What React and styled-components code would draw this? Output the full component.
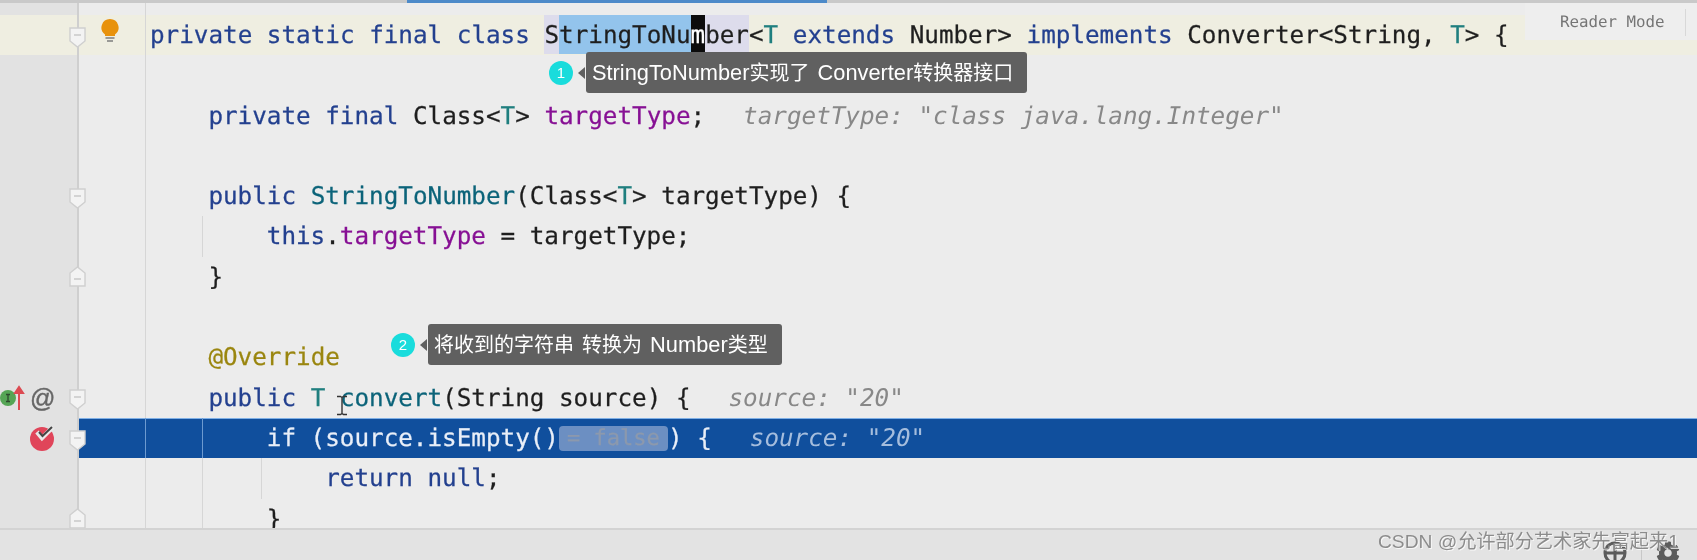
import React from 'react';
import styled, { createGlobalStyle } from 'styled-components';
import { FaCog } from 'react-icons/fa';

const GlobalStyle = createGlobalStyle`
  html, body { margin: 0; padding: 0; height: 100%; overflow: hidden; background: #ececec; }
`;

const tokenColors = {
  kw: '#23408f',
  id: '#1e1e1e',
  type: '#1f7f7f',
  field: '#871094',
  fn: '#0b6379',
  ann: '#9a860f',
  on: '#e9eff8',
};

const Page = styled.div`
  width: 1697px;
  height: 560px;
  display: flex;
  flex-direction: column;
  position: relative;
  overflow: hidden;
  filter: blur(0.45px);
  font-family: "DejaVu Sans Mono", "Liberation Mono", monospace;
`;

const TopBar = styled.div`
  height: 3px;
  flex: none;
  background: #c9c9c9;
  padding-left: 407px;
`;

const ActiveTab = styled.div`
  width: 420px;
  height: 100%;
  background: #4d8ac9;
`;

const Editor = styled.div`
  flex: 1;
  min-height: 0;
  overflow: hidden;
  background: #ececec;
`;

const Row = styled.div`
  display: flex;
  height: ${(p) => p.$height || 40.3}px;
  background: ${(p) => (p.$tone === 'current' ? '#efeee1' : p.$tone === 'active' ? '#104f9d' : 'transparent')};
  box-shadow: ${(p) => (p.$tone === 'active' ? 'inset 0 1px 0 #7fb0e6' : 'none')};
`;

const Gutter = styled.div`
  width: 79px;
  flex: none;
  box-sizing: border-box;
  display: grid;
  grid-template-columns: 30px 27px 20px;
  align-items: center;
  background: ${(p) => (p.$tone === 'current' ? '#efeee1' : '#e2e2e2')};
  border-right: 2px solid #cfcfcf;
`;

const FoldColumn = styled.div`
  width: 67px;
  flex: none;
  box-sizing: border-box;
  display: flex;
  align-items: center;
  padding-left: 21px;
  border-right: 1px solid ${(p) => (p.$tone === 'active' ? '#6d9ad0' : '#d6d6d6')};
`;

const Code = styled.div`
  flex: 1;
  display: flex;
  align-items: center;
  padding-left: 4px;
  font-size: 24.27px;
  text-rendering: geometricPrecision;
  color: ${tokenColors.id};
`;

const CodeText = styled.div`
  white-space: pre;
  line-height: 39px;
  height: 39px;
  align-self: flex-start;
  -webkit-text-stroke: 0.25px currentColor;
`;

const Level = styled.span`
  display: inline-block;
  width: 58.4px;
  height: 40.3px;
  flex: none;
  position: relative;
  &::after {
    content: '';
    display: ${(p) => (p.$guide ? 'block' : 'none')};
    position: absolute;
    top: 0;
    bottom: 0;
    right: 5px;
    width: 1px;
    background: ${(p) => (p.$active ? '#6d9ad0' : '#d6d6d6')};
  }
`;

const Token = styled.span`
  color: ${(p) => tokenColors[p.$kind] || tokenColors.id};
`;

const Mark = styled.span`
  display: inline-block;
  height: 39px;
  background: ${(p) => (p.$mark === 'sel' ? '#93c4ec' : p.$mark === 'caret' ? '#0c0c0c' : '#dddcec')};
  color: ${(p) => (p.$mark === 'caret' ? '#ffffff' : tokenColors.id)};
`;

const Hint = styled.span`
  margin-left: 38px;
  font-style: italic;
  -webkit-text-stroke: 0;
  color: ${(p) => (p.$active ? '#a5bddd' : '#888888')};
`;

const InlayPill = styled.span`
  display: inline-block;
  width: 109px;
  height: 25px;
  box-sizing: border-box;
  padding-left: 8px;
  border-radius: 4px;
  background: #6c8fc2;
  color: #8c99ad;
  font-size: 22px;
  line-height: 25px;
  vertical-align: 1px;
`;

const FoldSvg = styled.svg`
  grid-column: 3;
  justify-self: end;
  width: 17px;
  height: 21px;
  margin-right: -9px;
  margin-top: ${(p) => (p.$up ? 0 : 4)}px;
  position: relative;
  z-index: 2;
  transform: ${(p) => (p.$up ? 'scaleY(-1)' : 'none')};
`;

const ImplementIcon = styled.svg`
  grid-column: 1;
  width: 28px;
  height: 26px;
`;

const AtSign = styled.span`
  grid-column: 2;
  font-family: "Liberation Sans", sans-serif;
  font-size: 25px;
  line-height: 26px;
  color: #666666;
  -webkit-text-stroke: 0.4px currentColor;
`;

const BreakIcon = styled.svg`
  grid-column: 2;
  width: 26px;
  height: 28px;
`;

const Bulb = styled.svg`
  width: 20px;
  height: 24px;
  margin-top: -8px;
`;

const ReaderBar = styled.div`
  position: absolute;
  left: 1525px;
  right: 0;
  top: 3px;
  height: 37px;
  background: #eeeeee;
  display: flex;
  align-items: center;
  padding-left: 35px;
  font-size: 15.8px;
  color: #757575;
  text-rendering: geometricPrecision;
  &::after {
    content: '';
    position: absolute;
    left: 160px;
    top: 6px;
    bottom: 4px;
    width: 1px;
    background: #d8d8d8;
  }
`;

const Tip = styled.div`
  position: absolute;
  left: ${(p) => p.$left}px;
  top: ${(p) => p.$top}px;
  display: flex;
  align-items: center;
  font-family: "Liberation Sans", "Noto Sans CJK SC", sans-serif;
`;

const TipBadge = styled.div`
  width: 24px;
  height: 24px;
  border-radius: 50%;
  background: #19dcdc;
  color: #ffffff;
  font-size: 15px;
  line-height: 24px;
  text-align: center;
  margin-right: 5px;
`;

const TipArrow = styled.div`
  width: 0;
  height: 0;
  border-top: 6px solid transparent;
  border-bottom: 6px solid transparent;
  border-right: 7px solid #606060;
`;

const TipBox = styled.div`
  height: 41px;
  box-sizing: border-box;
  padding: 0 14px 0 6px;
  margin-left: 1px;
  background: #606060;
  border-radius: 3px;
  color: #ffffff;
  font-size: 20px;
  line-height: 41px;
  white-space: pre;
`;

const TipLatin = styled.span`
  font-size: 21.8px;
  word-spacing: 2px;
`;

const TextCursor = styled.svg`
  position: absolute;
  left: 336px;
  top: 395px;
  width: 12px;
  height: 21px;
`;

const StatusBar = styled.div`
  height: 32px;
  flex: none;
  box-sizing: border-box;
  background: #e3e3e3;
  border-top: 2px solid #d3d3d3;
  display: flex;
  justify-content: flex-end;
  align-items: flex-start;
  padding: 11px 17px 0 0;
  overflow: hidden;
`;

const StatusIcon = styled.div`
  width: 24px;
  height: 24px;
  flex: none;
  color: #5c5c5c;
  margin-left: ${(p) => p.$gap || 0}px;
  border-left: ${(p) => (p.$divided ? '1px solid #c8c8c8' : 'none')};
  padding-left: ${(p) => (p.$divided ? 14 : 0)}px;
`;

const Watermark = styled.div`
  position: absolute;
  left: 1378px;
  top: 530px;
  font-family: "Liberation Sans", "Noto Sans CJK SC", sans-serif;
  font-size: 19.2px;
  line-height: 24px;
  white-space: pre;
  color: #8c8c8c;
  text-shadow: 1px 1px 0 rgba(255, 255, 255, 0.75);
`;

function Fold({ up }) {
  return (
    <FoldSvg $up={up} viewBox="0 0 17 21">
      <path d="M1 1h15v13l-7.5 6L1 14z" fill="#f3f3f3" stroke="#cfcfcf" strokeWidth="1.4" />
      <path d="M5 8h7" stroke="#c4c4c4" strokeWidth="1.4" />
    </FoldSvg>
  );
}

function Line({ tone, indent = 0, guides = [], gutter, fold, lead, children }) {
  const active = tone === 'active';
  return (
    <Row $tone={tone}>
      <Gutter $tone={tone}>
        {gutter}
        {fold && <Fold up={fold === 'up'} />}
      </Gutter>
      <FoldColumn $tone={tone}>{lead}</FoldColumn>
      <Code>
        {Array.from({ length: indent }, (_, i) => (
          <Level key={i} $guide={guides.includes(i)} $active={active} />
        ))}
        <CodeText>{children}</CodeText>
      </Code>
    </Row>
  );
}

const K = ({ children }) => <Token $kind="kw">{children}</Token>;
const G = () => <Token $kind="type">T</Token>;

export default function App() {
  return (
    <>
      <GlobalStyle />
      <Page>
        <TopBar><ActiveTab /></TopBar>
        <Editor>
          <Row $height={12}>
            <Gutter /><FoldColumn /><Code />
          </Row>

          <Line
            tone="current"
            fold="down"
            lead={
              <Bulb viewBox="0 0 20 24">
                <path d="M10 0a8.5 8.5 0 0 1 5 15.4V17H5v-1.6A8.5 8.5 0 0 1 10 0z" fill="#e8920c" />
                <path d="M5.5 19h9M7 22h6" stroke="#7d7d7d" strokeWidth="1.6" />
              </Bulb>
            }
          >
            <K>{'private static final class '}</K>
            <Mark $mark="word">S</Mark>
            <Mark $mark="sel">tringToNu</Mark>
            <Mark $mark="caret">m</Mark>
            <Mark $mark="word">ber</Mark>
            {'<'}<G />{' '}<K>extends</K>{' Number> '}<K>implements</K>
            {' Converter<String, '}<G />{'> {'}
          </Line>

          <Line />

          <Line indent={1}>
            <K>{'private final '}</K>{'Class<'}<G />{'> '}
            <Token $kind="field">targetType</Token>;
            <Hint>targetType: "class java.lang.Integer"</Hint>
          </Line>

          <Line />

          <Line indent={1} fold="down">
            <K>{'public '}</K><Token $kind="fn">StringToNumber</Token>{'(Class<'}<G />
            {'> targetType) {'}
          </Line>

          <Line indent={2} guides={[0]}>
            <K>this</K>.<Token $kind="field">targetType</Token>{' = targetType;'}
          </Line>

          <Line indent={1} fold="up">{'}'}</Line>

          <Line />

          <Line indent={1}><Token $kind="ann">@Override</Token></Line>

          <Line
            indent={1}
            fold="down"
            gutter={
              <>
                <ImplementIcon viewBox="0 0 28 26">
                  <circle cx="8" cy="13" r="8" fill="#55a555" />
                  <path d="M6 9.5h4M8 9.5v7M6 16.5h4" stroke="#2d4a2d" strokeWidth="1.3" fill="none" />
                  <path d="M19 25V3M15 8l4-6 4 6z" stroke="#dc4a52" strokeWidth="2" fill="#dc4a52" />
                </ImplementIcon>
                <AtSign>@</AtSign>
              </>
            }
          >
            <K>{'public '}</K><G />{' '}<Token $kind="fn">convert</Token>
            {'(String source) {'}
            <Hint>source: "20"</Hint>
          </Line>

          <Line
            tone="active"
            indent={2}
            guides={[0]}
            fold="down"
            gutter={
              <BreakIcon viewBox="0 0 26 28">
                <circle cx="12" cy="15" r="12" fill="#e0455a" />
                <path d="M7 8l5 6 11-11" stroke="#e9e9e9" strokeWidth="4.5" fill="none" />
                <path d="M9 8l3.5 4L22 3" stroke="#444444" strokeWidth="2" fill="none" />
              </BreakIcon>
            }
          >
            <Token $kind="on">if (source.isEmpty()</Token>
            <InlayPill>= false</InlayPill>
            <Token $kind="on">{') {'}</Token>
            <Hint $active>source: "20"</Hint>
          </Line>

          <Line indent={3} guides={[0, 1]}>
            <K>return null</K>;
          </Line>

          <Line indent={2} guides={[0]} fold="up">{'}'}</Line>
        </Editor>

        <StatusBar>
          <StatusIcon>
            <svg width="24" height="24" viewBox="0 0 24 24" fill="none" stroke="currentColor" strokeWidth="3">
              <circle cx="12" cy="12" r="10" />
              <path d="M12 2v20M2 12h20" />
            </svg>
          </StatusIcon>
          <StatusIcon $gap={14} $divided><FaCog size={24} /></StatusIcon>
        </StatusBar>

        <ReaderBar>Reader Mode</ReaderBar>

        <Tip $left={549} $top={52}>
          <TipBadge>1</TipBadge>
          <TipArrow />
          <TipBox><TipLatin>StringToNumber</TipLatin>实现了<TipLatin> Converter</TipLatin>转换器接口</TipBox>
        </Tip>

        <Tip $left={391} $top={324}>
          <TipBadge>2</TipBadge>
          <TipArrow />
          <TipBox>将收到的字符串<TipLatin> </TipLatin>转换为<TipLatin> Number</TipLatin>类型</TipBox>
        </Tip>

        <TextCursor viewBox="0 0 12 21">
          <path d="M1 1.5h3.5l1.5 1 1.5-1H11M6 2.5v16M1 19.5h3.5l1.5-1 1.5 1H11" stroke="#333333" strokeWidth="1.4" fill="none" />
        </TextCursor>

        <Watermark>CSDN @允许部分艺术家先富起来1</Watermark>
      </Page>
    </>
  );
}
